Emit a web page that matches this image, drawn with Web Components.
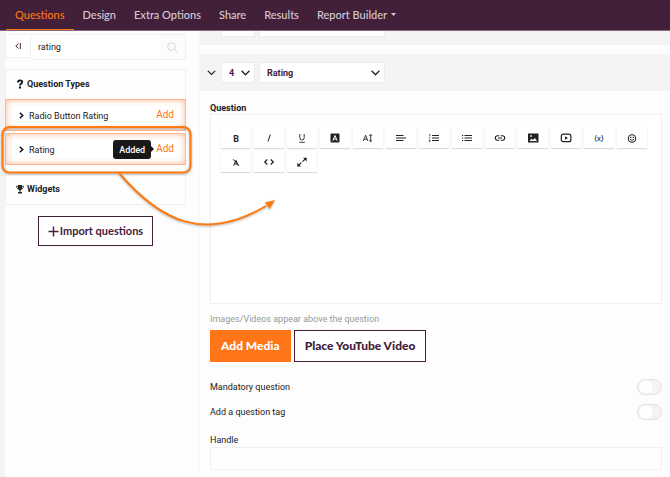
<!DOCTYPE html>
<html lang="en">
<head>
<meta charset="utf-8">
<title>Survey builder</title>
<style>
  :root {
    --plum: #43203a;
    --orange: #ff7518;
    --ink: #222;
    --line: #f0f0f0;
    --page: #fdfdfd;
    --display: Lato, "Open Sans", sans-serif;
  }
  body {
    margin: 0;
    background: var(--page);
    color: var(--ink);
    font: 9px/12px Roboto, "Liberation Sans", sans-serif;
  }
</style>
</head>
<body>
<survey-builder>
  <top-nav slot="nav">
    <nav-item active>Questions</nav-item>
    <nav-item>Design</nav-item>
    <nav-item>Extra Options</nav-item>
    <nav-item>Share</nav-item>
    <nav-item>Results</nav-item>
    <nav-item caret>Report Builder</nav-item>
  </top-nav>
  <side-panel slot="side">
    <type-item>Radio Button Rating</type-item>
    <type-item tip="Added">Rating</type-item>
  </side-panel>
  <question-card></question-card>
  <callout-arrow slot="overlay"></callout-arrow>
</survey-builder>

<script>
const define = (name, html, setup) => {
  customElements.define(name, class extends HTMLElement {
    constructor() {
      super().attachShadow({ mode: "open" }).innerHTML = `
      <style>
        *, :host { box-sizing: border-box; }
        button, input, select { font: inherit; color: inherit; margin: 0; padding: 0; border-radius: 0; }
        svg { display: block; }
      </style>` + html;
    }
    connectedCallback() {
      if (setup) setup(this, this.shadowRoot);
    }
  });
};

define("survey-builder", `
  <style>
    :host { display: block; position: relative; min-height: 100vh; overflow: hidden; }
    .columns { display: flex; min-height: calc(100vh - 31px); }
    .side { flex: 0 0 199px; padding: 3px 13px 0 0; border-left: 5px solid #f4f4f4; }
    .main { flex: 1; min-width: 0; border-left: 1px solid #f8f8f8; }
  </style>
  <slot name="nav"></slot>
  <div class="columns">
    <aside class="side"><slot name="side"></slot></aside>
    <main class="main"><slot></slot></main>
  </div>
  <slot name="overlay"></slot>
`);

define("top-nav", `
  <style>
    :host { display: block; background: var(--plum); border-bottom: 1px solid #846b7e; }
    nav { display: flex; height: 30px; padding-left: 6px; }
  </style>
  <nav><slot></slot></nav>
`);

define("nav-item", `
  <style>
    :host { display: block; }
    a {
      display: flex;
      align-items: center;
      gap: 4px;
      height: 30px;
      padding: 0 9px;
      border-bottom: 1px solid transparent;
      color: #d5cbd3;
      font: 500 11px/14px var(--display);
      text-decoration: none;
      white-space: nowrap;
    }
    :host([active]) a { color: var(--orange); border-color: var(--orange); }
    svg { display: none; }
    :host([caret]) svg { display: block; }
  </style>
  <a href="#"><slot></slot><svg width="5" height="3"><path d="M0 0h5L2.5 3z" fill="currentColor"/></svg></a>
`);

define("side-panel", `
  <style>
    :host { display: block; }
    .search { display: flex; align-items: flex-start; }
    .search button { width: 26px; height: 24px; border: 1px solid var(--line); background: #fff; display: grid; place-items: center; color: var(--plum); }
    .field { flex: 1; min-width: 0; display: flex; height: 26px; border: 1px solid var(--line); border-left: 0; background: #fff; }
    .field input { flex: 1; min-width: 0; border: 0; padding: 0 7px; outline: 0; background: none; }
    .field label { width: 25px; display: grid; place-items: center; background: #fcfcfc; }
    .group { margin-top: 9px; border: 1px solid var(--line); background: #fefefe; }
    h2 { display: flex; align-items: center; gap: 3px; height: 29px; margin: 0; padding: 0 10px 1px; font: inherit; font-weight: 700; }
    .types { display: grid; gap: 2px; margin: 0 -1px; }
    .widgets { margin-top: 9px; height: 30px; border-top: 1px solid var(--line); }
    .import {
      display: flex;
      align-items: center;
      gap: 1px;
      height: 30px;
      margin: 11px auto 0;
      padding: 0 9px;
      border: 1px solid var(--plum);
      background: #fff;
      color: var(--plum);
      font: 700 11px/14px var(--display);
    }
  </style>
  <div class="search">
    <button type="button" aria-label="Collapse panel">
      <svg width="6" height="6" fill="none" stroke="currentColor"><path d="M3.3.5.8 3l2.5 2.5M5.3 0v6"/></svg>
    </button>
    <div class="field">
      <input id="q" type="text" value="rating">
      <label for="q" aria-label="Search">
        <svg width="11" height="11" fill="none" stroke="#d6d6d6"><circle cx="4.5" cy="4.5" r="3.8"/><path d="m7.3 7.3 3.2 3.2"/></svg>
      </label>
    </div>
  </div>
  <div class="group">
    <h2>
      <svg width="8" height="10" viewBox="0 0 8 10"><path d="M2 3.4C2 .7 6.2.7 6.2 3.1 6.2 4.9 4 4.8 4 6.6" fill="none" stroke="#111" stroke-width="1.9"/><path d="M3 7.6h2v2H3z" fill="#111"/></svg>
      Question Types
    </h2>
    <div class="types"><slot></slot></div>
    <h2 class="widgets">
      <svg width="8" height="9" viewBox="0 0 8 9" fill="#222"><path d="M2 0h4v3.6Q5.7 5.3 4.5 5.6V7H6v1.5H2V7h1.5V5.6Q2.3 5.3 2 3.6z"/><path d="M2 1.2H.5Q.5 3.8 2.500 4M6 1.2h1.500Q7.500 3.8 5.500 4" fill="none" stroke="#222" stroke-width=".8"/></svg>
      Widgets
    </h2>
  </div>
  <button class="import" type="button">
    <svg width="11" height="11" stroke="currentColor" stroke-width="1.4"><path d="M5.5.5v10M.5 5.5h10"/></svg>
    Import questions
  </button>
`);

define("type-item", `
  <style>
    :host {
      display: flex;
      align-items: center;
      gap: 5px;
      height: 32px;
      padding: 0 11px 0 13px;
      border: 1px solid #ffb892;
      background: #fff;
      box-shadow: inset 0 0 6px #ffb48c;
    }
    .name { flex: 1; padding-top: 1px; }
    .tip {
      position: relative;
      padding: 4px 6px 3px;
      border-radius: 3px;
      background: #191919;
      color: #fff;
      font-weight: 500;
    }
    .tip::after {
      content: "";
      position: absolute;
      left: 100%;
      top: 50%;
      margin-top: -3px;
      border: 3px solid transparent;
      border-left-color: #191919;
      border-right: 0;
    }
    .tip:empty { display: none; }
    button { border: 0; background: none; color: var(--orange); font-size: 10px; }
  </style>
  <svg width="5" height="7" fill="none" stroke="#111" stroke-width="1.5"><path d="m.8.8 2.9 2.7L.8 6.2"/></svg>
  <span class="name"><slot></slot></span>
  <span class="tip" role="tooltip"></span>
  <button type="button">Add</button>
`, (host, root) => {
  root.querySelector(".tip").textContent = host.getAttribute("tip") || "";
});

define("pick-list", `
  <style>
    :host { display: grid; align-items: center; height: 21px; border: 1px solid #ececec; background: #fff; color: var(--plum); font-weight: 700; }
    select, svg { grid-area: 1 / 1; }
    select { width: 100%; height: 19px; padding: 0 7px; border: 0; appearance: none; background: none; outline: 0; }
    svg { justify-self: end; margin-right: 4px; pointer-events: none; }
  </style>
  <select><option></option></select>
  <svg width="9" height="6" fill="none" stroke="#222" stroke-width="1.3"><path d="m.6.8 3.9 4 3.9-4"/></svg>
`, (host, root) => {
  root.querySelector("select").setAttribute("aria-label", host.getAttribute("label"));
  root.querySelector("option").textContent = host.getAttribute("value");
});

const TOOLS = [
  ["Bold", `<text x="7" y="10.5" text-anchor="middle" font-size="9" font-weight="700">B</text>`],
  ["Italic", `<path d="M8.3 3.5 6 10.5" fill="none" stroke="#222"/>`],
  ["Underline", `<path d="M4.8 3v3.7q0 2.3 2.2 2.3t2.2-2.3V3M4.3 11.3h5.5" fill="none" stroke="#222" stroke-width=".9"/>`],
  ["Colors", `<rect x="2.5" y="2.5" width="9" height="9" rx="1"/><path d="M4.9 9.7 7 4.5l2.1 5.2M5.7 8h2.6" fill="none" stroke="#fff"/>`],
  ["Font size", `<path d="M2.3 10 4.6 4.2 6.9 10M3.2 8.2h2.8M9.7 3.5v7M8.3 4.8l1.4-1.4 1.4 1.4M8.3 9.3l1.4 1.4 1.4-1.4" fill="none" stroke="#222" stroke-width=".9"/>`],
  ["Align", `<path d="M2 4.5h7.5M2 7h10M2 9.5h7.5" stroke="#222" stroke-width="1.2"/>`],
  ["Ordered list", `<path d="M5 4.5h7M5 7h7M5 9.5h7" stroke="#222" stroke-width="1.2"/><path d="M2 3.5h1v2M1.8 7h1.5M1.8 9h1.3v1.5H1.8" fill="none" stroke="#222" stroke-width=".7"/>`],
  ["Unordered list", `<path d="M4.5 4.5H12M4.5 7H12M4.5 9.5H12M2 4.5h1.2M2 7h1.2M2 9.5h1.2" stroke="#222" stroke-width="1.2"/>`],
  ["Insert link", `<path d="M6.3 4.8H4.5a2.2 2.2 0 0 0 0 4.4h1.8M7.7 4.8h1.8a2.2 2.2 0 0 1 0 4.4H7.7M5 7h4" fill="none" stroke="#222" stroke-width="1.1"/>`],
  ["Insert image", `<path fill-rule="evenodd" d="M2 2.5h10.5v9H2zM3.5 10h7.5L8.8 7 7 9 5.5 7.8zM4.2 4.2v1.6h1.6V4.2z"/>`],
  ["Insert video", `<rect x="2.3" y="3.2" width="9.6" height="7.5" rx="2" fill="none" stroke="#222" stroke-width="1.2"/><path d="m6 5.3 3 1.7-3 1.7z"/>`],
  ["Insert variable", `<text x="7" y="10" text-anchor="middle" font-size="8">{x}</text>`],
  ["Emoticons", `<circle cx="7" cy="7.5" r="3.7" fill="none" stroke="#222" stroke-width="1.1"/><path d="M5 8.2q2 2.4 4 0" fill="none" stroke="#222" stroke-width=".9"/><path d="M5.2 5.8h1.2v1.2H5.2zM7.7 5.8h1.2v1.2H7.7z"/>`],
  ["Clear formatting", `<path d="M4.7 10.7 7 5.3l2.3 5.4M5.5 9h3M4.2 4.3l5.7 6.5" fill="none" stroke="#222"/>`],
  ["Code view", `<path d="M5.3 4.5 2.7 7l2.6 2.5M8.7 4.5 11.3 7 8.7 9.5" fill="none" stroke="#222" stroke-width="1.2"/>`],
  ["Fullscreen", `<path d="M8 2.7h3.7v3.7zM2.3 7.7v3.7H6z"/><path d="m10.5 3.9-3 2.8M3.6 10.3l2.7-2.6" stroke="#222" stroke-width="1.1"/>`],
];

define("text-editor", `
  <style>
    :host { display: flex; flex-direction: column; height: 190px; padding: 12px 10px; border: 1px solid var(--line); background: #fff; }
    .bar { display: flex; flex-wrap: wrap; gap: 3px; }
    button { display: grid; place-items: center; width: 30px; height: 21px; border: 0; background: #fff; box-shadow: 0 1px 1px #ddd, 0 0 1px #e6e6e6; }
    svg { width: 14px; height: 14px; fill: #222; }
    .text { flex: 1; outline: 0; }
  </style>
  <div class="bar" role="toolbar">
    ${TOOLS.map(([label, art]) => `<button type="button" aria-label="${label}"><svg viewBox="0 0 14 14">${art}</svg></button>`).join("")}
  </div>
  <div class="text" contenteditable="true" role="textbox" aria-label="Question"></div>
`);

define("toggle-row", `
  <style>
    :host { display: block; }
    label { display: flex; align-items: center; justify-content: space-between; height: 16px; }
    input {
      appearance: none;
      width: 25px;
      height: 16px;
      border: 1px solid #e2e2e2;
      border-radius: 8px;
      background: radial-gradient(circle at 8px 50%, #fff 6px, #f4f4f4 7px);
    }
  </style>
  <label><slot></slot><input type="checkbox"></label>
`);

define("question-card", `
  <style>
    :host { display: block; padding-bottom: 8px; }
    .head { display: flex; align-items: center; gap: 4px; background: #f4f4f4; padding-left: 7px; height: 37px; }
    .previous { height: 14px; margin-bottom: 9px; padding-left: 21px; align-items: flex-start; }
    .previous span { height: 6px; border: 1px solid #ececec; border-top: 0; background: #fff; }
    .head > :nth-last-child(2) { width: 34px; }
    .head > :last-child { width: 126px; }
    .fold { width: 10px; height: 10px; border: 0; background: none; }
    .body { padding: 11px 8px 0 10px; }
    .title { font-weight: 700; }
    .hint { margin: 9px 0 5px; color: #949a9e; }
    .media { display: flex; gap: 3px; margin-bottom: 17px; }
    .media button { height: 32px; padding: 0 10px; border: 1px solid var(--plum); background: #fff; color: var(--plum); font: 900 12px/16px var(--display); }
    .media .solid { border-color: var(--orange); background: var(--orange); color: #fff; }
    toggle-row + toggle-row { margin-top: 9px; }
    .handle { display: block; margin-top: 14px; }
    .handle input { display: block; width: 100%; height: 23px; margin-top: 1px; padding: 0 7px; border: 1px solid var(--line); background: #fefefe; }
  </style>
  <div class="head previous"><span></span><span></span></div>
  <div class="head">
    <button class="fold" type="button" aria-label="Collapse question">
      <svg width="9" height="6" fill="none" stroke="#222" stroke-width="1.2"><path d="m.8.8 3.7 3.7L8.2.8"/></svg>
    </button>
    <pick-list label="Question number" value="4"></pick-list>
    <pick-list label="Question type" value="Rating"></pick-list>
  </div>
  <div class="body">
    <div class="title">Question</div>
    <text-editor></text-editor>
    <p class="hint">Images/Videos appear above the question</p>
    <div class="media">
      <button class="solid" type="button">Add Media</button>
      <button type="button">Place YouTube Video</button>
    </div>
    <toggle-row>Mandatory question</toggle-row>
    <toggle-row>Add a question tag</toggle-row>
    <label class="handle">Handle<input type="text"></label>
  </div>
`);

define("callout-arrow", `
  <style>
    :host { position: absolute; left: 0; top: 120px; pointer-events: none; }
    svg { filter: drop-shadow(0 1px 1px rgba(0, 0, 0, .3)); }
  </style>
  <svg width="290" height="115" fill="none" stroke="#ff7a0f" stroke-width="2">
    <rect x="2.5" y="7" width="188" height="45.5" rx="7"/>
    <path d="M119 53C160 101 204 123 266 86"/>
    <path d="m275 80-5.500 9-4.500-6.500z" fill="#ff7a0f" stroke="none"/>
  </svg>
`);
</script>
</body>
</html>
